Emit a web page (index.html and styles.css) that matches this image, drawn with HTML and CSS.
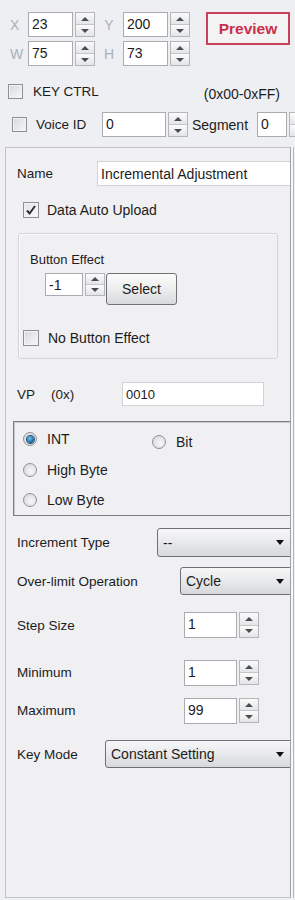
FILE: index.html
```html
<!DOCTYPE html>
<html lang="en">
<head>
    <meta charset="UTF-8">
    <meta name="viewport" content="width=device-width, initial-scale=1.0">
    <title>Incremental Adjustment</title>
    <link rel="stylesheet" href="styles.css">
</head>
<body>

    <!-- Position / size and preview -->
    <div class="geo-row">
        <div class="coords">
            <span class="axis">X</span>
            <div class="spin"><div class="spin-field f-45">23</div><div class="spin-btns"><span class="up"></span><span class="down"></span></div></div>
            <span class="axis axis-mid">Y</span>
            <div class="spin"><div class="spin-field f-45">200</div><div class="spin-btns"><span class="up"></span><span class="down"></span></div></div>
            <span class="axis">W</span>
            <div class="spin"><div class="spin-field f-45">75</div><div class="spin-btns"><span class="up"></span><span class="down"></span></div></div>
            <span class="axis axis-mid">H</span>
            <div class="spin"><div class="spin-field f-45">73</div><div class="spin-btns"><span class="up"></span><span class="down"></span></div></div>
        </div>
        <button class="preview">Preview</button>
    </div>

    <div class="key-row">
        <span class="check"><span class="box"></span>KEY CTRL</span>
        <span class="range">(0x00-0xFF)</span>
    </div>

    <div class="voice-row">
        <span class="check voice-label"><span class="box"></span>Voice ID</span>
        <div class="spin"><div class="spin-field f-64">0</div><div class="spin-btns"><span class="up"></span><span class="down"></span></div></div>
        <span class="segment">Segment</span>
        <div class="spin seg-spin"><div class="spin-field f-30">0</div><div class="spin-btns"><span class="up"></span><span class="down"></span></div></div>
    </div>

    <!-- Property panel -->
    <div class="panel">
        <div class="row name-row">
            <span class="lbl w-80">Name</span>
            <div class="text-input name-input">Incremental Adjustment</div>
        </div>

        <div class="row auto-row">
            <span class="check"><span class="box checked">
                <svg viewBox="0 0 14 14" width="14" height="14"><path d="M3 7.5l2.6 3L11 3" fill="none" stroke="#2b2f36" stroke-width="2"/></svg>
            </span>Data Auto Upload</span>
        </div>

        <div class="group">
            <div class="group-title">Button Effect</div>
            <div class="effect-row">
                <div class="spin"><div class="spin-field f-38 h-23">-1</div><div class="spin-btns h-23"><span class="up"></span><span class="down"></span></div></div>
                <button class="select-btn">Select</button>
            </div>
            <div class="row no-effect">
                <span class="check"><span class="box"></span>No Button Effect</span>
            </div>
        </div>

        <div class="row vp-row">
            <span class="lbl w-34">VP</span>
            <span class="lbl w-71">(0x)</span>
            <div class="text-input vp-input">0010</div>
        </div>

        <div class="radio-box">
            <span class="radio-item"><span class="radio on"></span>INT</span>
            <span class="radio-item bit"><span class="radio"></span>Bit</span>
            <span class="radio-item"><span class="radio"></span>High Byte</span>
            <span></span>
            <span class="radio-item"><span class="radio"></span>Low Byte</span>
        </div>

        <div class="row inc-row">
            <span class="lbl w-140">Increment Type</span>
            <div class="dropdown w-sel-138">--</div>
        </div>

        <div class="row over-row">
            <span class="lbl w-163">Over-limit Operation</span>
            <div class="dropdown w-sel-115">Cycle</div>
        </div>

        <div class="row step-row">
            <span class="lbl w-167">Step Size</span>
            <div class="spin"><div class="spin-field f-53">1</div><div class="spin-btns"><span class="up"></span><span class="down"></span></div></div>
        </div>

        <div class="row min-row">
            <span class="lbl w-167">Minimum</span>
            <div class="spin"><div class="spin-field f-53">1</div><div class="spin-btns"><span class="up"></span><span class="down"></span></div></div>
        </div>

        <div class="row max-row">
            <span class="lbl w-167">Maximum</span>
            <div class="spin"><div class="spin-field f-53">99</div><div class="spin-btns"><span class="up"></span><span class="down"></span></div></div>
        </div>

        <div class="row key-mode-row">
            <span class="lbl w-88">Key Mode</span>
            <div class="dropdown w-sel-190">Constant Setting</div>
        </div>
    </div>

</body>
</html>
```

FILE: styles.css
```css
body {
    margin: 0;
    padding-top: 12px;
    font-family: 'Liberation Sans', Arial, sans-serif;
    font-size: 13px;
    color: #1c1c1c;
    background: #eeeff2;
    width: 295px;
    height: 900px;
    overflow: hidden;
}

/* Top: coordinates + preview */
.geo-row {
    display: flex;
    align-items: flex-start;
    padding-left: 8px;
}
.coords {
    display: grid;
    grid-template-columns: 20px 67px 28px 67px;
    grid-template-rows: 25px 25px;
    row-gap: 4px;
}
.axis {
    display: flex;
    align-items: center;
    padding-left: 2px;
    font-size: 14px;
    color: #aab0ba;
}
.axis-mid {
    justify-content: center;
    padding-left: 0;
}
.preview {
    margin-left: 16px;
    width: 84px;
    height: 33px;
    border: 2px solid #c9415a;
    background: #f3f3f4;
    color: #c8304a;
    font-family: 'Liberation Sans', Arial, sans-serif;
    font-weight: bold;
    font-size: 15.5px;
    padding: 0;
}

/* Spin box */
.spin {
    display: flex;
    flex: none;
    gap: 2px;
    height: 100%;
}
.spin-field {
    background: #fff;
    border: 1px solid #a9abb0;
    box-sizing: border-box;
    height: 25px;
    padding: 4px 0 0 3px;
    font-size: 14px;
    line-height: 15px;
}
.spin-btns {
    width: 20px;
    height: 25px;
    box-sizing: border-box;
    border: 1px solid #b4b6ba;
    display: flex;
    flex-direction: column;
}
.spin-btns span {
    flex: 1;
    display: flex;
    align-items: center;
    justify-content: center;
    background: linear-gradient(#fbfbfb, #e4e5e7);
}
.spin-btns .up {
    border-bottom: 1px solid #c4c6ca;
}
.spin-btns span::after {
    content: "";
    border-left: 4px solid transparent;
    border-right: 4px solid transparent;
}
.spin-btns .up::after {
    border-bottom: 4px solid #4a4c50;
}
.spin-btns .down::after {
    border-top: 4px solid #4a4c50;
}
.f-45 { width: 45px; }
.f-64 { width: 64px; }
.f-30 { width: 30px; }
.f-38 { width: 38px; }
.f-53 { width: 53px; height: 26px; }
.h-23 { height: 23px; }
.step-row .spin-btns { height: 26px; }

/* Checkboxes */
.check {
    display: flex;
    flex: none;
    align-items: center;
    gap: 9px;
    font-size: 14px;
    white-space: nowrap;
}
.box {
    width: 15px;
    height: 15px;
    box-sizing: border-box;
    border: 1px solid #8d9096;
    background: linear-gradient(135deg, #d6d8dc, #f7f8f9);
    box-shadow: inset 0 0 0 1px #f2f2f2;
    display: flex;
    align-items: center;
    justify-content: center;
    flex: none;
}
.box.checked {
    width: 16px;
    height: 16px;
    background: linear-gradient(135deg, #e3e4e7, #fafafa);
}

.key-row {
    display: flex;
    justify-content: space-between;
    height: 22px;
    margin-top: 14px;
    padding: 0 15px 0 8px;
}
.key-row .check {
    gap: 10px;
    font-size: 13.5px;
}
.range {
    align-self: flex-end;
    font-size: 14px;
}

.voice-row {
    display: flex;
    align-items: center;
    height: 25px;
    margin-top: 10px;
    padding-left: 12px;
    white-space: nowrap;
}
.voice-label {
    width: 90px;
    font-size: 13.5px;
}
.segment {
    flex: none;
    margin-left: 4px;
    font-size: 14px;
}
.seg-spin {
    margin-left: 9px;
}

/* Property panel */
.panel {
    margin: 10px 0 0 5px;
    width: 286px;
    height: 751px;
    box-sizing: border-box;
    border: 1px solid #c2c4c8;
    border-right-color: #9fa2a8;
    box-shadow: 2px 0 0 #f7f7f8, 3px 0 0 #b3b5ba;
    background: #f0f0f3;
    padding-left: 11px;
    overflow: hidden;
}
.row {
    display: flex;
    align-items: center;
    white-space: nowrap;
}
.lbl {
    flex: none;
}
.w-80 { width: 80px; }
.w-34 { width: 34px; }
.w-71 { width: 71px; }
.w-140 { width: 140px; }
.w-163 { width: 163px; }
.w-167 { width: 167px; }
.w-88 { width: 88px; }

.text-input {
    flex: none;
    background: #fff;
    border: 1px solid #d0d2d6;
    box-sizing: border-box;
    padding-left: 3px;
    display: flex;
    align-items: center;
}
.name-row {
    margin-top: 13px;
    height: 25px;
}
.name-input {
    width: 200px;
    height: 25px;
    font-size: 14px;
}
.auto-row {
    margin-top: 14px;
    height: 20px;
    padding-left: 6px;
}
.auto-row .check {
    gap: 8px;
}

/* Button effect group */
.group {
    margin: 13px 0 0 1px;
    width: 260px;
    height: 126px;
    box-sizing: border-box;
    border: 1px solid #d3d5d9;
    border-radius: 3px;
    box-shadow: inset 1px 1px 0 #fafafa;
}
.group-title {
    margin-top: 18px;
    padding-left: 11px;
    height: 16px;
    line-height: 16px;
}
.effect-row {
    display: flex;
    align-items: flex-start;
    margin: 5px 0 0 26px;
    height: 32px;
}
.effect-row .spin {
    height: auto;
}
.select-btn {
    margin-left: 1px;
    width: 71px;
    height: 32px;
    border: 1px solid #6f7277;
    border-radius: 3px;
    background: linear-gradient(#fbfbfb, #eceded 50%, #d9dadc);
    font-family: 'Liberation Sans', Arial, sans-serif;
    font-size: 14px;
    color: #1c1c1c;
    padding: 0;
}
.no-effect {
    margin: 23px 0 0 4px;
    height: 20px;
}
.no-effect .check {
    gap: 9px;
}
.no-effect .box,
.auto-row .box {
    width: 16px;
    height: 16px;
}

.vp-row {
    margin-top: 23px;
    height: 24px;
}
.vp-input {
    width: 142px;
    height: 24px;
}

/* Radio group */
.radio-box {
    margin: 15px 0 0 -4px;
    width: 290px;
    height: 95px;
    box-sizing: border-box;
    border: 1px solid #7d8086;
    box-shadow: inset 1px 1px 0 #c8cacd;
    padding: 2px 0 0 9px;
    display: grid;
    grid-template-columns: 129px auto;
    grid-template-rows: 30px 31px 29px;
}
.radio-item {
    display: flex;
    align-items: center;
    gap: 10px;
    font-size: 14px;
}
.radio-item.bit {
    padding-top: 5px;
}
.radio {
    width: 14px;
    height: 14px;
    box-sizing: border-box;
    border-radius: 50%;
    border: 1px solid #8e9197;
    background: radial-gradient(circle at 60% 60%, #f7f7f8, #d2d4d8);
    display: flex;
    align-items: center;
    justify-content: center;
}
.radio.on::after {
    content: "";
    width: 7px;
    height: 7px;
    border-radius: 50%;
    background: radial-gradient(circle at 40% 35%, #6cc4f0, #136196 70%);
    box-shadow: 0 0 0 1px #2b4d66;
}

/* Dropdowns */
.dropdown {
    flex: none;
    box-sizing: border-box;
    border: 1px solid #6d7076;
    border-radius: 3px;
    background: linear-gradient(#f7f7f8, #e8e9eb 50%, #d7d8db);
    padding: 0 10px 0 5px;
    display: flex;
    align-items: center;
    justify-content: space-between;
    height: 100%;
    font-size: 14px;
}
.dropdown::after {
    content: "";
    border-left: 4px solid transparent;
    border-right: 4px solid transparent;
    border-top: 5px solid #111;
}
.w-sel-138 { width: 138px; }
.w-sel-115 { width: 115px; }
.w-sel-190 { width: 190px; }

.inc-row {
    margin-top: 12px;
    height: 29px;
}
.over-row {
    margin-top: 10px;
    height: 28px;
}
.step-row {
    margin-top: 17px;
    height: 26px;
}
.min-row {
    margin-top: 22px;
    height: 25px;
}
.max-row {
    margin-top: 13px;
    height: 25px;
}
.key-mode-row {
    margin-top: 17px;
    height: 28px;
}
.row .lbl {
    font-size: 13.5px;
}
```
